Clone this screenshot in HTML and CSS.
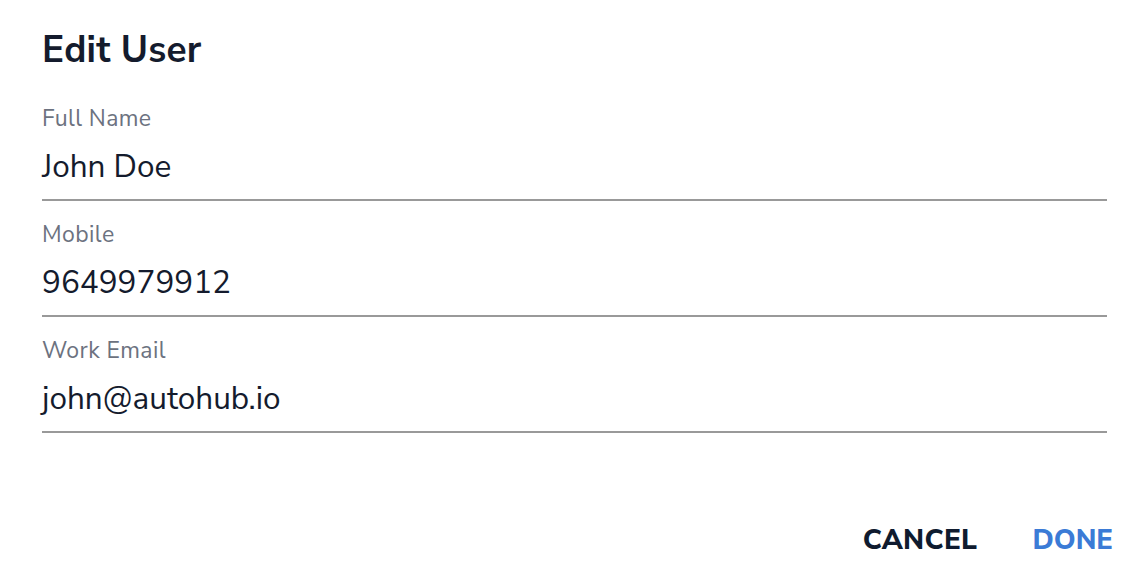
FILE: index.html
```html
<!DOCTYPE html>
<html>
<head>
<meta charset="utf-8">
<link rel="stylesheet" href="styles.css">
</head>
<body>
<div class="dialog">
  <h1 class="title">Edit User</h1>
  <div class="fields">
    <div class="field">
      <div class="label">Full Name</div>
      <div class="value">John Doe</div>
    </div>
    <div class="field">
      <div class="label">Mobile</div>
      <div class="value">9649979912</div>
    </div>
    <div class="field">
      <div class="label">Work Email</div>
      <div class="value">john@autohub.io</div>
    </div>
  </div>
  <div class="actions">
    <button class="btn btn-cancel">CANCEL</button>
    <button class="btn btn-done">DONE</button>
  </div>
</div>
</body>
</html>
```
FILE: styles.css
```css
html, body {
  margin: 0;
  padding: 0;
  background: #ffffff;
}
body {
  font-family: "Nunito Sans", Lato, "Open Sans", sans-serif;
  color: #141b2d;
}
.dialog {
  width: 1148px;
  height: 582px;
  box-sizing: border-box;
  padding: 27px 41px 0 42px;
  display: flex;
  flex-direction: column;
}
.title {
  margin: 0;
  font-size: 37px;
  line-height: 46px;
  font-weight: 700;
  letter-spacing: 0.2px;
  color: #141b2d;
}
.fields {
  margin-top: 12px;
  display: flex;
  flex-direction: column;
}
.field {
  border-bottom: 2px solid #999999;
  padding: 19px 0 12px;
}
.label {
  font-size: 23px;
  line-height: 30px;
  letter-spacing: 0.4px;
  color: #6c7280;
}
.value {
  margin-top: 13px;
  font-size: 31.5px;
  line-height: 40px;
  color: #141b2d;
}
.actions {
  display: flex;
  justify-content: flex-end;
  gap: 55px;
  margin-top: 89px;
  margin-right: -6px;
}
.btn {
  background: none;
  border: none;
  padding: 0;
  font-family: inherit;
  font-size: 28px;
  font-weight: 800;
  letter-spacing: 0.3px;
  line-height: 36px;
  cursor: pointer;
}
.btn-cancel {
  color: #0f1b2f;
}
.btn-done {
  font-size: 27.5px;
  letter-spacing: 0;
  color: #3b7bd6;
}
```
